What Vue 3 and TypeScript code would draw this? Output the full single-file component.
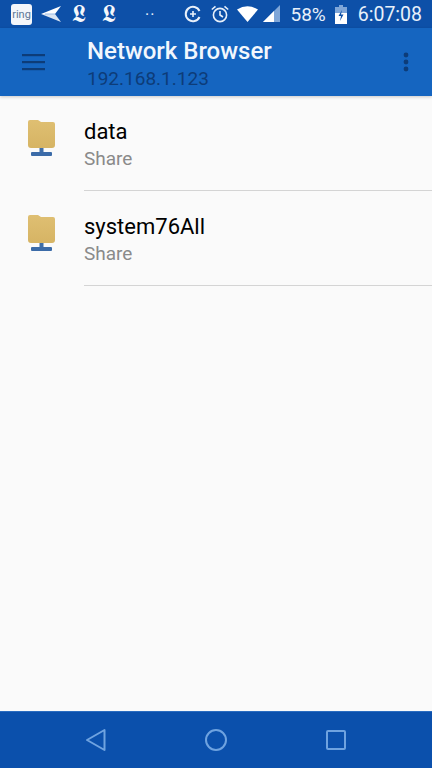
<script setup lang="ts">
const shares = [{ name: 'data' }, { name: 'system76All' }]
</script>

<template>
  <div class="screen">
    <header class="status">
      <div class="notifs">
        <span class="ring">ring</span>
        <svg class="send" width="20" height="18" viewBox="0 0 20 18"><path d="M0 9 L20 1 L14 9 Z" fill="#fff" /><path d="M0 9 L20 17 L14 9 Z" fill="#fff" fill-opacity=".85" /><path d="M4 9 H14" stroke="#9dbde6" stroke-width="1" /></svg>
        <span class="gothic">𝕷</span>
        <span class="gothic second">𝕷</span>
        <span class="dots">··</span>
      </div>
      <div class="sysicons">
        <svg width="18" height="18" viewBox="0 0 18 18" fill="none" stroke="#e8f0fa"><path d="M15.5 12 A7.2 7.2 0 1 1 15.5 6" stroke-width="2" /><path d="M6 9 H12 M9 6 V12" stroke-width="1.6" /></svg>
        <svg class="alarm" width="20" height="20" viewBox="0 0 20 20" fill="none" stroke="#e8f0fa" stroke-width="1.6"><circle cx="10" cy="11" r="6.6" /><path d="M10 7 V11 L13 13 M1.8 5.5 L5.5 2.4 M18.2 5.5 L14.5 2.4" /></svg>
        <svg class="wifi" width="21" height="16" viewBox="0 0 21 16"><path d="M0 3.5 Q10.5 -3 21 3.5 L10.5 16 Z" fill="#fff" /></svg>
        <svg class="signal" width="17" height="18" viewBox="0 0 17 18"><path d="M0 17 L17 0 V17 Z" fill="#7fa6d8" /><path d="M0 17 L11 6 V17 Z" fill="#fff" /></svg>
        <span class="pct">58%</span>
        <svg class="battery" width="12" height="19" viewBox="0 0 12 19"><path d="M4 0 H8 V2 H12 V19 H0 V2 H4 Z" fill="#fff" /><path d="M4 0 H8 V2 H12 V8 H0 V2 H4 Z" fill="#7fa6d8" /><path d="M7 5 L3.5 11 H6 L5 16 L8.5 9.5 H6 Z" fill="#0d50a8" /></svg>
        <span class="time">6:07:08</span>
      </div>
    </header>

    <div class="toolbar">
      <button class="tool-btn menu" aria-label="Menu">
        <svg width="24" height="18" viewBox="0 0 24 18" fill="#0d3c78"><rect y="1" width="23" height="2.2" /><rect y="8" width="23" height="2.2" /><rect y="15" width="23" height="2.2" /></svg>
      </button>
      <div class="titles">
        <div class="title">Network Browser</div>
        <div class="subtitle">192.168.1.123</div>
      </div>
      <button class="tool-btn more" aria-label="More">
        <svg width="6" height="20" viewBox="0 0 6 20" fill="#0d3c78"><circle cx="3" cy="3" r="2.4" /><circle cx="3" cy="10" r="2.4" /><circle cx="3" cy="17" r="2.4" /></svg>
      </button>
    </div>

    <main class="list">
      <div v-for="s in shares" :key="s.name" class="row">
        <div class="icon">
          <svg width="30" height="38" viewBox="0 0 30 38">
            <defs>
              <linearGradient id="fold" x1="0" y1="0" x2="0" y2="1">
                <stop offset="0" stop-color="#dfbf72" />
                <stop offset="1" stop-color="#d6b464" />
              </linearGradient>
            </defs>
            <path d="M1 2 Q1 0 3 0 H11 L14 2 H26 Q28 2 28 4 V25 Q28 28 25 28 H4 Q1 28 1 25 Z" fill="url(#fold)" />
            <rect x="12.5" y="28" width="4" height="5" fill="#3f6ea8" />
            <rect x="4" y="32" width="21" height="4" rx="1" fill="#3b6ba8" />
          </svg>
        </div>
        <div class="body">
          <div class="name">{{ s.name }}</div>
          <div class="kind">Share</div>
        </div>
      </div>
    </main>

    <footer class="nav">
      <svg width="22" height="24" viewBox="0 0 22 24" fill="none" stroke="#6fa3e0" stroke-width="2"><path d="M19.5 2 V22 L2 12 Z" stroke-linejoin="round" /></svg>
      <svg width="24" height="24" viewBox="0 0 24 24" fill="none" stroke="#6fa3e0" stroke-width="2"><circle cx="12" cy="12" r="10" /></svg>
      <svg width="22" height="22" viewBox="0 0 22 22" fill="none" stroke="#6fa3e0" stroke-width="2"><rect x="2" y="2" width="18" height="18" rx="1" /></svg>
    </footer>
  </div>
</template>

<style scoped>
.screen {
  width: 432px;
  height: 768px;
  display: flex;
  flex-direction: column;
  background: #fafafa;
  font-family: Roboto, "Liberation Sans", sans-serif;
  overflow: hidden;
}
.status {
  height: 28px;
  flex: none;
  background: #0d50a8;
  display: flex;
  align-items: center;
  justify-content: space-between;
  padding: 0 10px 0 11px;
  color: #e8f0fa;
}
.notifs, .sysicons {
  display: flex;
  align-items: center;
}
.ring {
  width: 21px;
  height: 21px;
  border-radius: 3px;
  background: #f4f6fa;
  color: #5f7896;
  font-size: 11px;
  line-height: 21px;
  text-align: center;
}
.send { margin-left: 9px; }
.gothic {
  margin-left: 11px;
  width: 17px;
  font-family: "DejaVu Sans", "DejaVu Serif", serif;
  font-size: 25px;
  font-weight: 400;
  line-height: 26px;
  color: #f4f7fb;
}
.gothic.second { margin-left: 13px; }
.dots {
  margin-left: 26px;
  font-size: 16px;
  letter-spacing: 1px;
}
.sysicons svg { flex: none; }
.alarm { margin-left: 8px; }
.wifi { margin-left: 7px; }
.signal { margin-left: 5px; }
.pct {
  margin-left: 10px;
  font-size: 19px;
}
.battery { margin-left: 9px; }
.time {
  margin-left: 11px;
  font-size: 19.5px;
}
.toolbar {
  height: 68px;
  flex: none;
  background: #1565c0;
  display: flex;
  align-items: center;
  box-shadow: 0 1px 3px rgba(0, 0, 0, .2);
  position: relative;
}
.tool-btn {
  border: 0;
  background: none;
  padding: 0;
  display: flex;
  align-items: center;
  justify-content: center;
}
.menu {
  width: 87px;
  padding-right: 20px;
}
.titles {
  flex: 1;
  display: flex;
  flex-direction: column;
  padding-top: 2px;
}
.title {
  color: #f2f7fd;
  font-size: 24px;
  font-weight: 500;
  line-height: 30px;
}
.subtitle {
  color: #0d3c78;
  font-size: 19px;
  line-height: 24px;
  margin-top: 1px;
}
.more {
  width: 52px;
}
.list {
  flex: 1;
}
.row {
  height: 95px;
  display: flex;
}
.icon {
  width: 84px;
  flex: none;
  padding: 24px 0 0 27px;
  box-sizing: border-box;
}
.body {
  flex: 1;
  border-bottom: 1px solid #d4d4d4;
  padding-top: 22px;
}
.name {
  color: #000;
  font-size: 22px;
  line-height: 28px;
}
.kind {
  color: #8a8a8a;
  font-size: 19px;
  line-height: 26px;
}
.nav {
  height: 57px;
  flex: none;
  box-sizing: border-box;
  background: #0b50ac;
  border-top: 1px solid #2a6cc0;
  display: flex;
  align-items: center;
  justify-content: space-between;
  padding: 0 85px;
}
</style>
